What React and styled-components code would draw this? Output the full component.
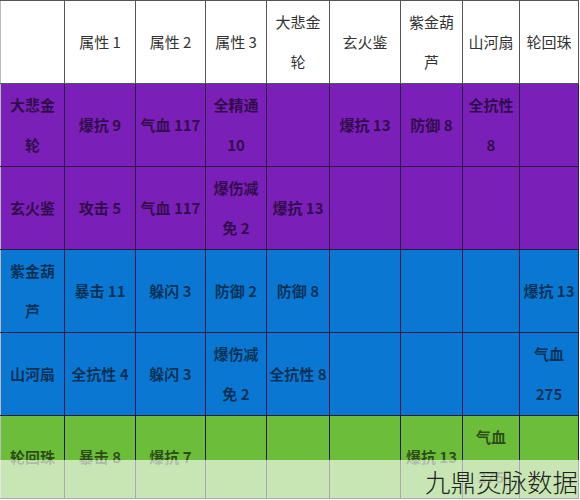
import React from "react";
import styled, { createGlobalStyle } from "styled-components";

const GlobalStyle = createGlobalStyle`
  html, body {
    margin: 0;
    padding: 0;
    background: #fff;
    overflow: hidden;
  }
  body {
    font-family: "Noto Sans CJK SC", "Noto Sans", sans-serif;
  }
`;

const Page = styled.div`
  position: relative;
  width: 580px;
  height: 500px;
  overflow: hidden;
`;

const Table = styled.table`
  width: 579px;
  border-collapse: collapse;
  table-layout: fixed;
`;

const rowColors = {
  head: "#ffffff",
  purple: "#7a1fb8",
  blue: "#0a78d2",
  green: "#6cbd3a",
};

const Row = styled.tr`
  height: 83px;
  background: ${(p) => rowColors[p.$tone]};
`;

const Cell = styled.td`
  padding: 0;
  border: 1px solid ${(p) => (p.$tone === "head" ? "#555" : "#2a1a45")};
  text-align: center;
  vertical-align: middle;
  font-size: 15px;
  line-height: 40px;
  white-space: pre-line;
  font-weight: ${(p) => (p.$tone === "head" ? 400 : 700)};
  color: ${(p) => (p.$tone === "head" ? "#333" : "rgba(0, 0, 0, 0.6)")};
  &:first-child {
    border-left: 1px solid #bbb;
  }
`;

const Watermark = styled.div`
  position: absolute;
  left: 0;
  right: 0;
  top: 460px;
  height: 40px;
  background: rgba(255, 255, 255, 0.62);
  display: flex;
  align-items: center;
  justify-content: flex-end;
  padding-right: 2px;
  font-size: 25.5px;
  font-weight: 300;
  color: #222;
  letter-spacing: 0;
`;

const widths = [64, 71, 70, 61, 63, 71, 62, 57, 59];

const rows = [
  {
    tone: "head",
    cells: ["", "属性 1", "属性 2", "属性 3", "大悲金\n轮", "玄火鉴", "紫金葫\n芦", "山河扇", "轮回珠"],
  },
  {
    tone: "purple",
    cells: ["大悲金\n轮", "爆抗 9", "气血 117", "全精通\n10", "", "爆抗 13", "防御 8", "全抗性\n8", ""],
  },
  {
    tone: "purple",
    cells: ["玄火鉴", "攻击 5", "气血 117", "爆伤减\n免 2", "爆抗 13", "", "", "", ""],
  },
  {
    tone: "blue",
    cells: ["紫金葫\n芦", "暴击 11", "躲闪 3", "防御 2", "防御 8", "", "", "", "爆抗 13"],
  },
  {
    tone: "blue",
    cells: ["山河扇", "全抗性 4", "躲闪 3", "爆伤减\n免 2", "全抗性 8", "", "", "", "气血\n275"],
  },
  {
    tone: "green",
    cells: ["轮回珠", "暴击 8", "爆抗 7", "", "", "", "爆抗 13", "气血\n275", ""],
  },
];

export default function App() {
  return (
    <Page>
      <GlobalStyle />
      <Table>
        <colgroup>
          {widths.map((w, i) => (
            <col key={i} style={{ width: w }} />
          ))}
        </colgroup>
        <tbody>
          {rows.map((row, r) => (
            <Row key={r} $tone={row.tone}>
              {row.cells.map((text, c) => (
                <Cell key={c} $tone={row.tone}>
                  {text}
                </Cell>
              ))}
            </Row>
          ))}
        </tbody>
      </Table>
      <Watermark>九鼎灵脉数据</Watermark>
    </Page>
  );
}
